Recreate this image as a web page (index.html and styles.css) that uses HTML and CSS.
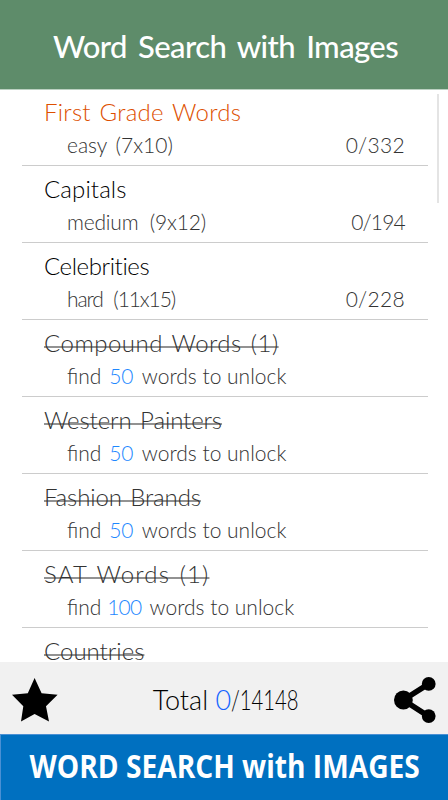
FILE: index.html
```
<!DOCTYPE html>
<html lang="en">
<head>
    <meta charset="UTF-8">
    <meta name="viewport" content="width=device-width, initial-scale=1.0">
    <title>Word Search with Images</title>

    <link rel="stylesheet" href="styles.css">
</head>
<body>

<div class="app">
    <header class="header">
        <h1>Word Search with Images</h1>
    </header>

    <main class="list-area">
        <ul class="category-list">
            <li class="category current first-grade">
                <h2><span>First Grade Words</span></h2>
                <p><span class="level easy">easy (7x10)</span><span class="count">0/332</span></p>
            </li>
            <li class="category capitals">
                <h2><span>Capitals</span></h2>
                <p><span class="level medium">medium (9x12)</span><span class="count narrow">0/194</span></p>
            </li>
            <li class="category celebrities">
                <h2><span>Celebrities</span></h2>
                <p><span class="level hard">hard (11x15)</span><span class="count">0/228</span></p>
            </li>

            <!-- Locked categories -->
            <li class="category locked compound">
                <h2><span>Compound Words (1)</span></h2>
                <p><span class="unlock">find <b>50</b> words to unlock</span></p>
            </li>
            <li class="category locked painters">
                <h2><span>Western Painters</span></h2>
                <p><span class="unlock">find <b>50</b> words to unlock</span></p>
            </li>
            <li class="category locked brands">
                <h2><span>Fashion Brands</span></h2>
                <p><span class="unlock">find <b>50</b> words to unlock</span></p>
            </li>
            <li class="category locked sat">
                <h2><span>SAT Words (1)</span></h2>
                <p><span class="unlock">find <b class="hundred">100</b> words to unlock</span></p>
            </li>
            <li class="category locked">
                <h2><span>Countries</span></h2>
            </li>
        </ul>
        <div class="scrollbar"></div>
    </main>

    <footer class="footer">
        <svg class="star" width="46" height="44" viewBox="0 0 46 44">
            <path d="M22.6 0 L29.6 15.2 L45.6 16.7 L34 28.2 L37 43.5 L22.6 36 L9 43.5 L11.3 28.2 L0 16.7 L15.8 15.2 Z"/>
        </svg>
        <div class="total">Total <b>0</b><span class="all">/14148</span></div>
        <svg class="share" width="42" height="46" viewBox="0 0 42 46">
            <path d="M34.7 6.9 L9.4 23 L34.7 39.3" fill="none" stroke="#000" stroke-width="5.6"/>
            <circle cx="9.4" cy="23" r="9.4"/>
            <circle cx="34.7" cy="6.9" r="6.9"/>
            <circle cx="34.7" cy="39.1" r="6.9"/>
        </svg>
    </footer>

    <div class="banner"><span>WORD SEARCH with IMAGES</span></div>
</div>

</body>
</html>
```
FILE: styles.css
```
* {
    box-sizing: border-box;
}

body {
    font-family: Lato, sans-serif;
    margin: 0;
    background-color: #fff;
}

h1, h2, p, ul {
    margin: 0;
    padding: 0;
}

.app {
    display: flex;
    flex-direction: column;
    height: 800px;
    overflow: hidden;
}

.header {
    flex: none;
    display: flex;
    align-items: center;
    justify-content: center;
    height: 89px;
    padding: 3px 0 0 3px;
    background-color: #5e8c6a;
    box-shadow: 0 1px 0 #bcd1c2;
    position: relative;
}

.header h1 {
    font-size: 31px;
    font-weight: 500;
    line-height: 38px;
    color: #fff;
    white-space: nowrap;
    word-spacing: 4px;
    letter-spacing: -0.6px;
}

.list-area {
    position: relative;
    height: 573px;
    overflow: hidden;
}

.category-list {
    list-style: none;
    padding: 0 20px 0 22px;
}

.category {
    height: 77px;
    padding: 7px 23px 0 22px;
    border-bottom: 1px solid #ccc;
}

.category h2 {
    font-size: 24px;
    font-weight: 300;
    line-height: 32px;
    color: #000;
    word-spacing: 2px;
    white-space: nowrap;
}

.category p {
    display: flex;
    justify-content: space-between;
    padding-left: 23px;
    font-size: 21px;
    font-weight: 300;
    line-height: 34px;
    color: #333;
    white-space: nowrap;
}

.category b,
.total b {
    font-weight: 300;
    color: #1e88ff;
}

.current h2 {
    color: #dd4f00;
}

.locked h2 {
    color: #333;
}

.locked h2 span {
    text-decoration: underline 2px #929292;
    text-decoration-skip-ink: none;
    text-underline-offset: -6px;
}

/* tracking per title */
.first-grade h2 { letter-spacing: 0.25px; }
.capitals h2 { letter-spacing: 0.1px; }
.celebrities h2 { letter-spacing: -0.4px; }
.compound h2 { letter-spacing: 0.5px; }
.painters h2 { letter-spacing: -0.1px; }
.brands h2 { letter-spacing: -0.12px; }
.sat h2 { letter-spacing: 1.15px; }

.easy { word-spacing: 3px; }
.medium { letter-spacing: -0.2px; word-spacing: 6px; }
.hard { letter-spacing: -1.1px; word-spacing: 6px; }

.unlock b {
    margin: 0 3px 0 2px;
}

.unlock .hundred {
    letter-spacing: -0.8px;
    margin-left: 0;
}

.count {
    letter-spacing: 0.3px;
}

.narrow {
    letter-spacing: -0.8px;
}

.scrollbar {
    position: absolute;
    top: 5px;
    right: 9px;
    width: 2px;
    height: 109px;
    background-color: #e4e4e4;
}

.footer {
    flex: none;
    display: flex;
    align-items: center;
    justify-content: space-between;
    height: 72px;
    padding: 4px 12px 0;
    background-color: #f1f1f1;
}

.star {
    margin-bottom: 1px;
}

.total {
    font-size: 27px;
    font-weight: 300;
    line-height: 36px;
    white-space: nowrap;
}

.total b {
    color: #1465ff;
}

.total .all {
    display: inline-block;
    margin-right: -22px;
    transform: scaleX(0.75);
    transform-origin: left;
}

.banner {
    flex: none;
    height: 66px;
    border-top: 1px solid #4a90d4;
    border-left: 1px solid #4a90d4;
    background-color: #0070c0;
    color: #fff;
    font: 700 32px/61px "Open Sans", sans-serif;
    text-align: center;
    white-space: nowrap;
}

.banner span {
    display: inline-block;
    transform: scaleX(0.88);
}
```
